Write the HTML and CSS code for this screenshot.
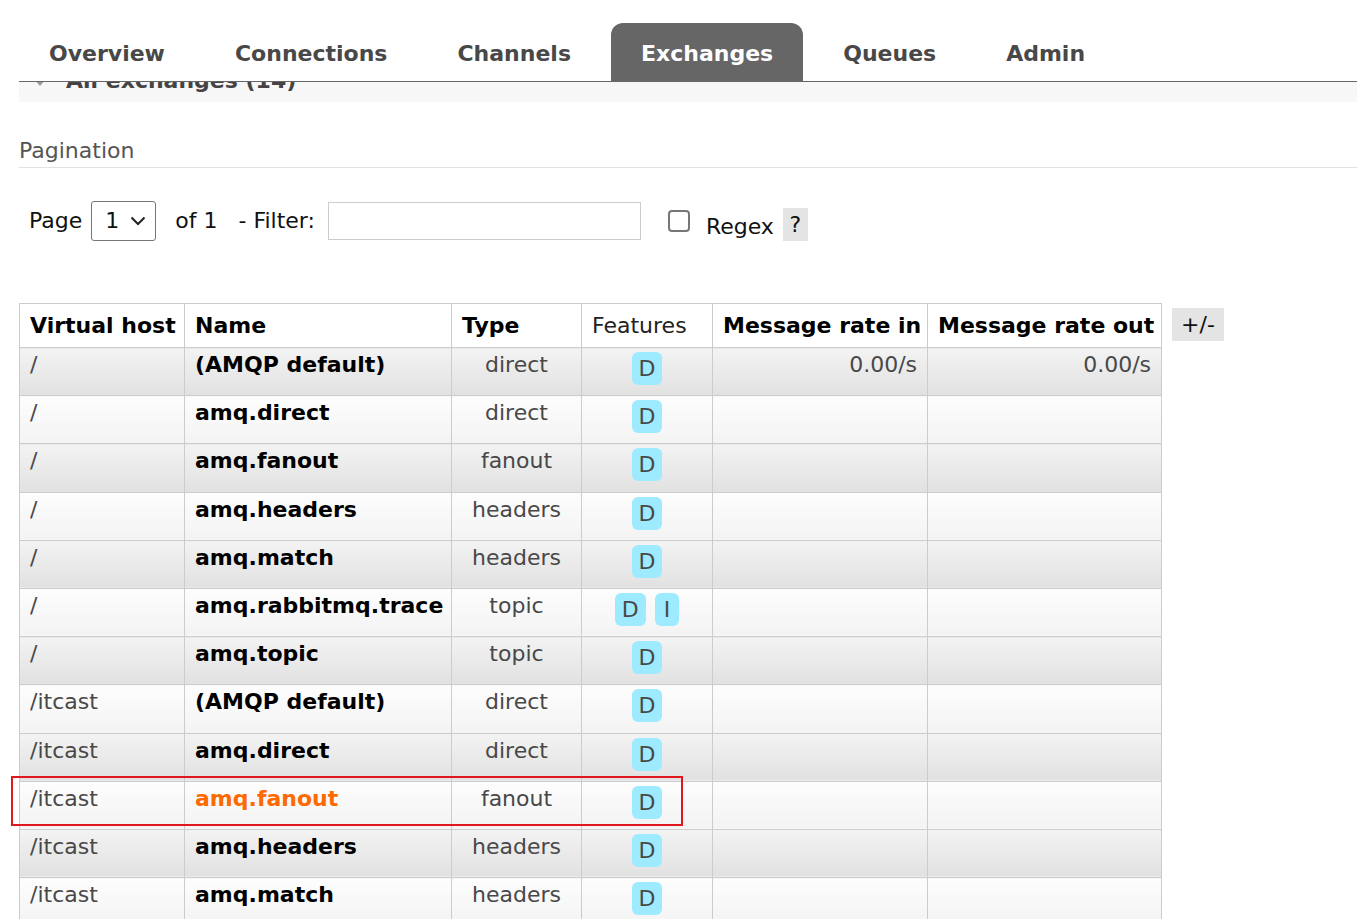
FILE: index.html
```html
<!DOCTYPE html>
<html lang="en">
<head>
<meta charset="utf-8">
<title>RabbitMQ Management - Exchanges</title>
<link rel="stylesheet" href="styles.css">
</head>
<body>
<header class="top">
  <nav class="tabs">
    <a class="tab">Overview</a>
    <a class="tab">Connections</a>
    <a class="tab">Channels</a>
    <a class="tab active">Exchanges</a>
    <a class="tab">Queues</a>
    <a class="tab">Admin</a>
  </nav>
</header>

<main class="main">
  <h2 class="section-title"><span class="tri"></span>All exchanges (14)</h2>

  <h3 class="sub">Pagination</h3>
  <div class="pager">
    <span class="lbl">Page</span>
    <span class="select"><span>1</span>
      <svg class="chev" width="16" height="10" viewBox="0 0 16 10"><path d="M1.5 1.5 L8 8 L14.5 1.5" fill="none" stroke="#222" stroke-width="2"/></svg>
    </span>
    <span class="of">of 1</span>
    <span class="flt">- Filter:</span>
    <span class="input"></span>
    <span class="checkbox"></span>
    <span class="regex">Regex</span>
    <span class="help">?</span>
  </div>

  <div class="list-wrap">
    <table class="list">
      <colgroup>
        <col class="c-vhost"><col class="c-name"><col class="c-type"><col class="c-feat"><col class="c-in"><col class="c-out">
      </colgroup>
      <thead>
        <tr>
          <th>Virtual host</th>
          <th>Name</th>
          <th>Type</th>
          <th class="plain">Features</th>
          <th>Message rate in</th>
          <th>Message rate out</th>
        </tr>
      </thead>
      <tbody>
        <tr class="alt1"><td>/</td><td class="name">(AMQP default)</td><td class="c">direct</td><td class="c"><span class="badge">D</span></td><td class="r">0.00/s</td><td class="r">0.00/s</td></tr>
        <tr class="alt2"><td>/</td><td class="name">amq.direct</td><td class="c">direct</td><td class="c"><span class="badge">D</span></td><td></td><td></td></tr>
        <tr class="alt1"><td>/</td><td class="name">amq.fanout</td><td class="c">fanout</td><td class="c"><span class="badge">D</span></td><td></td><td></td></tr>
        <tr class="alt2"><td>/</td><td class="name">amq.headers</td><td class="c">headers</td><td class="c"><span class="badge">D</span></td><td></td><td></td></tr>
        <tr class="alt1"><td>/</td><td class="name">amq.match</td><td class="c">headers</td><td class="c"><span class="badge">D</span></td><td></td><td></td></tr>
        <tr class="alt2"><td>/</td><td class="name">amq.rabbitmq.trace</td><td class="c">topic</td><td class="c"><span class="badge">D</span><span class="badge badge-i">I</span></td><td></td><td></td></tr>
        <tr class="alt1"><td>/</td><td class="name">amq.topic</td><td class="c">topic</td><td class="c"><span class="badge">D</span></td><td></td><td></td></tr>
        <tr class="alt2"><td>/itcast</td><td class="name">(AMQP default)</td><td class="c">direct</td><td class="c"><span class="badge">D</span></td><td></td><td></td></tr>
        <tr class="alt1"><td>/itcast</td><td class="name">amq.direct</td><td class="c">direct</td><td class="c"><span class="badge">D</span></td><td></td><td></td></tr>
        <tr class="alt2"><td>/itcast</td><td class="name hot">amq.fanout</td><td class="c">fanout</td><td class="c"><span class="badge">D</span></td><td></td><td></td></tr>
        <tr class="alt1"><td>/itcast</td><td class="name">amq.headers</td><td class="c">headers</td><td class="c"><span class="badge">D</span></td><td></td><td></td></tr>
        <tr class="alt2"><td>/itcast</td><td class="name">amq.match</td><td class="c">headers</td><td class="c"><span class="badge">D</span></td><td></td><td></td></tr>
        <tr class="alt1"><td>/itcast</td><td class="name">amq.rabbitmq.trace</td><td class="c">topic</td><td class="c"><span class="badge">D</span><span class="badge badge-i">I</span></td><td></td><td></td></tr>
        <tr class="alt2"><td>/itcast</td><td class="name">amq.topic</td><td class="c">topic</td><td class="c"><span class="badge">D</span></td><td></td><td></td></tr>
      </tbody>
    </table>
    <span class="toggle">+/-</span>
  </div>
</main>

<div class="annot"></div>
</body>
</html>
```

FILE: styles.css
```css
* { box-sizing: border-box; }

body {
  margin: 0;
  font-family: "DejaVu Sans", Verdana, sans-serif;
  font-size: 22px;
  line-height: 26px;
  color: #484848;
  background: #fff;
}

.top {
  position: absolute;
  top: 0;
  left: 0;
  right: 0;
  height: 82px;
  background: #fff;
  z-index: 2;
}
.tabs {
  display: flex;
  gap: 10px;
  margin-left: 19px;
  padding-top: 23px;
  border-bottom: 1px solid #666;
}
.tab {
  padding: 18px 30px 14px;
  font-weight: bold;
  color: #484848;
  border-radius: 12px 12px 0 0;
}
.tab.active {
  background: #666;
  color: #fff;
}

.main {
  padding-left: 19px;
}

.section-title {
  margin: 60px 0 0;
  padding: 8px 0 8px 15px;
  font-size: 22px;
  line-height: 26px;
  font-weight: bold;
  color: #444;
  background: #f7f7f7;
}
.tri {
  display: inline-block;
  width: 0;
  height: 0;
  border-left: 6px solid transparent;
  border-right: 6px solid transparent;
  border-top: 7px solid #999;
  vertical-align: middle;
  margin-right: 20px;
}

.sub {
  margin: 35.5px 0 0;
  padding-bottom: 3.5px;
  font-size: 22px;
  line-height: 26px;
  font-weight: normal;
  color: #555;
  border-bottom: 1px solid #e2e2e2;
}

.pager {
  display: flex;
  align-items: center;
  height: 40px;
  margin-top: 33px;
  padding-left: 10px;
  color: #111;
}
.select {
  display: flex;
  align-items: center;
  justify-content: space-between;
  margin-left: 9px;
  width: 65px;
  height: 40px;
  padding: 0 9px 0 13px;
  border: 1px solid #767676;
  border-radius: 3px;
}
.chev { display: block; }
.of { margin-left: 19px; }
.flt { margin-left: 21px; }
.input {
  margin-left: 13px;
  width: 313px;
  height: 38px;
  border: 1px solid #ccc;
  background: #fff;
}
.checkbox {
  margin-left: 27px;
  width: 22px;
  height: 22px;
  border: 2px solid #767676;
  border-radius: 4px;
  background: #fff;
}
.regex {
  margin-left: 16px;
  margin-top: 12px;
}
.help {
  margin-left: 9px;
  margin-top: 7px;
  width: 25px;
  height: 33px;
  line-height: 33px;
  text-align: center;
  background: #e4e4e4;
}

.list-wrap {
  display: flex;
  align-items: flex-start;
  gap: 10px;
  margin-top: 62px;
}
.list {
  border-collapse: collapse;
  table-layout: fixed;
  width: 1143px;
  flex: none;
}
.c-vhost { width: 165px; }
.c-name { width: 267px; }
.c-type { width: 130px; }
.c-feat { width: 131px; }
.c-in { width: 215px; }
.c-out { width: 234px; }

.list th,
.list td {
  border: 1px solid #ccc;
  white-space: nowrap;
  overflow: hidden;
}
.list th {
  padding: 8.5px 10px;
  text-align: left;
  color: #000;
  font-weight: bold;
  background: #fff;
}
.list th.plain {
  font-weight: normal;
  color: #222;
}
.list td {
  padding: 4px 10px 10.2px;
  vertical-align: top;
  color: #484848;
}
.list tr.alt1 td { background: linear-gradient(#f3f3f3, #e1e1e1); }
.list tr.alt2 td { background: linear-gradient(#fdfdfd, #f3f3f3); }

.list td.name {
  font-weight: bold;
  color: #000;
}
.list td.name.hot { color: #ff6a00; }
.list td.c { text-align: center; }
.list td.r { text-align: right; }

.badge {
  display: inline-block;
  vertical-align: top;
  line-height: 33px;
  padding: 0 7px;
  border-radius: 6px;
  background: #9eebff;
  color: #484848;
}
.badge + .badge { margin-left: 9px; }
.badge-i { padding: 0 9px; }

.toggle {
  margin-top: 5px;
  width: 52px;
  height: 33px;
  line-height: 33px;
  text-align: center;
  background: #e4e4e4;
  color: #111;
}

/* red annotation box drawn over the screenshot */
.annot {
  position: absolute;
  left: 11px;
  top: 776px;
  width: 672px;
  height: 50px;
  border: 2px solid #e2161d;
  z-index: 3;
}
```
